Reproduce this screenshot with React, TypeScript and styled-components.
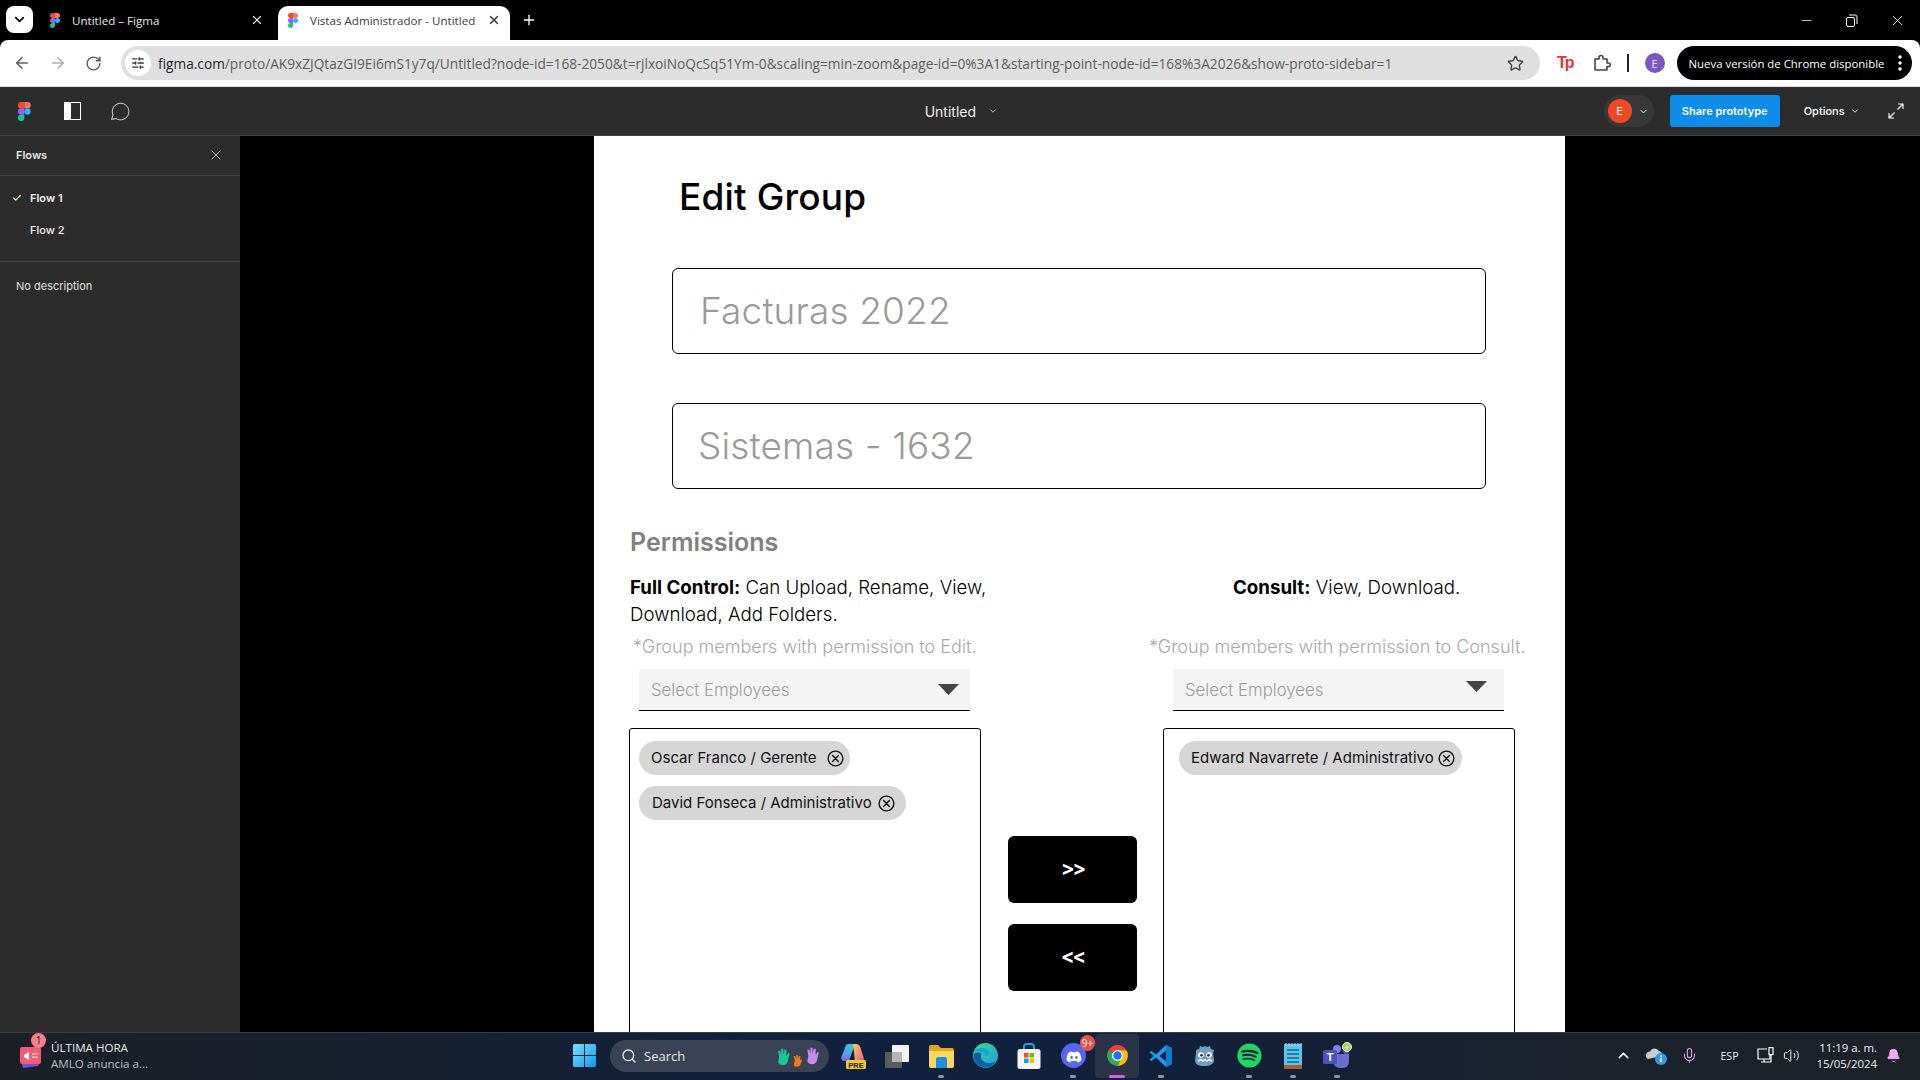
import React from "react";
import styled, { createGlobalStyle } from "styled-components";
import { ArrowLeft, ArrowRight, RotateCw, Star, X, Plus, ChevronDown, ChevronUp, Minus, Check, Search, Mic, Volume2, Bell, SlidersHorizontal } from "lucide-react";
import { FaDiscord, FaSpotify } from "react-icons/fa";

const Global = createGlobalStyle`
  html, body { margin: 0; padding: 0; background: #000; }
  * { box-sizing: border-box; }
`;

const Page = styled.div`
  width: 1920px; height: 1080px; overflow: hidden; display: flex; flex-direction: column;
  font-family: "Open Sans", "Liberation Sans", sans-serif;
`;

/* ---------- Chrome tab strip ---------- */
const TabStrip = styled.div`
  height: 40px; background: #000; display: flex; align-items: flex-end; flex: none; color: #fff;
`;
const TabListButton = styled.div`
  width: 27px; height: 27px; margin: 0 1px 7px 6px; border-radius: 8px; background: #fff; color: #111;
  display: flex; align-items: center; justify-content: center; flex: none;
`;
const Tab = styled.div<{ $active?: boolean; $w: number; $padL: number; $padR: number }>`
  width: ${p => p.$w}px; height: 34px; display: flex; align-items: center; padding: 0 ${p => p.$padR}px 6px ${p => p.$padL}px; gap: 12px; flex: none;
  border-radius: 10px 10px 0 0;
  background: ${p => (p.$active ? "#fff" : "transparent")};
  color: ${p => (p.$active ? "#3c3c3c" : "#e8e8e8")};
  font-size: 11.6px;
`;
const TabTitle = styled.span`
  flex: 1; white-space: nowrap; overflow: hidden;
`;
const NewTab = styled.div`
  margin: 0 0 6px 11px; height: 28px; display: flex; align-items: center; color: #fff;
`;
const WindowControls = styled.div`
  margin: 0 0 6px auto; height: 28px; display: flex; align-items: center; gap: 31px; padding-right: 14px; color: #fff;
`;

/* ---------- Chrome address bar ---------- */
const AddressBar = styled.div`
  height: 47px; background: #fff; border-radius: 8px 8px 0 0; flex: none; display: flex; align-items: center;
  padding-left: 13px; border-bottom: 1px solid #d8d8d8;
`;
const NavButton = styled.div<{ $dim?: boolean }>`
  width: 36px; display: flex; justify-content: flex-start; flex: none;
  color: ${p => (p.$dim ? "#b0b0b0" : "#5c5c5c")};
`;
const UrlPill = styled.div`
  width: 1419px; height: 34px; background: #dfdfdf; border-radius: 17px; display: flex; align-items: center; padding: 0 16px 0 4px; flex: none;
`;
const SiteIcon = styled.div`
  width: 26px; height: 26px; border-radius: 50%; background: #fff; display: flex; align-items: center; justify-content: center; color: #333; flex: none;
`;
const UrlText = styled.div`
  flex: 1; margin-left: 7px; font-size: 13.7px; color: #5c5c5c; white-space: nowrap; overflow: hidden;
  b { font-weight: 400; color: #222; }
`;
const ToolIcon = styled.div<{ $ml: number }>`
  margin-left: ${p => p.$ml}px; display: flex; align-items: center; flex: none;
`;
const TpMark = styled.span`
  font: 800 16px "Liberation Sans", sans-serif; color: #f0303a; letter-spacing: -2px;
`;
const Separator = styled.div`
  width: 2px; height: 18px; background: #222; margin-left: 16px; flex: none;
`;
const ProfileDot = styled.div`
  width: 20px; height: 20px; border-radius: 50%; background: #7b57c2; color: #e9e0ff; font-size: 11px; margin-left: 16px; display: flex; align-items: center; justify-content: center; flex: none;
`;
const UpdatePill = styled.div`
  width: 235px; height: 34px; margin-left: 12px; border-radius: 17px; background: #000; color: #fff; font-size: 11.4px; display: flex; align-items: center; justify-content: space-between; padding: 0 5px 0 12px; white-space: nowrap; flex: none;
`;

/* ---------- Figma header ---------- */
const FigmaBar = styled.div`
  height: 49px; background: #2c2c2c; border-bottom: 1px solid #444; flex: none; display: flex; align-items: center; padding-left: 18px; color: #fff;
  font-family: Inter, "Liberation Sans", sans-serif;
`;
const PanelIcon = styled.div`
  width: 17px; height: 18px; margin-left: 33px; border: 1px solid #fff; border-left: 7px solid #fff; flex: none;
`;
const CommentIcon = styled.svg`
  margin-left: 29px; flex: none;
`;
const DocTitle = styled.div`
  margin-left: 795px; width: 50px; font-size: 14px; white-space: nowrap; flex: none; color: #f0f0f0;
`;
const DocChevron = styled.div`
  margin-left: 13px; display: flex; color: #ddd; flex: none;
`;
const UserPill = styled.div`
  margin-left: 606px; width: 50px; height: 32px; border-radius: 16px; background: #383838; display: flex; align-items: center; padding-left: 4px; gap: 6px; flex: none;
`;
const Avatar = styled.div`
  width: 24px; height: 24px; border-radius: 50%; background: #f24822; color: #fff; font-size: 11px; display: flex; align-items: center; justify-content: center;
`;
const ShareButton = styled.div`
  margin-left: 16px; width: 110px; height: 32px; border-radius: 3px; background: #0d8ce9; color: #fff; font-size: 11px; font-weight: 600; display: flex; align-items: center; justify-content: center; white-space: nowrap; flex: none;
`;
const OptionsMenu = styled.div`
  margin-left: 24px; font-size: 11px; font-weight: 500; display: flex; align-items: center; gap: 5px; flex: none;
`;
const ExpandIcon = styled.svg`
  margin-left: 28px; flex: none;
`;

/* ---------- Body ---------- */
const Body = styled.div`
  flex: 1; min-height: 0; display: flex; background: #000;
`;
const Sidebar = styled.aside`
  width: 240px; background: #2c2c2c; color: #f0f0f0; flex: none; font: 500 11px Inter, "Liberation Sans", sans-serif;
`;
const SideHead = styled.div`
  height: 40px; display: flex; align-items: center; justify-content: space-between; padding: 0 16px 1px; border-bottom: 1px solid #444; font-weight: 600; color: #e6e6e6;
`;
const FlowList = styled.div`
  height: 86px; padding-top: 6px; border-bottom: 1px solid #444;
`;
const FlowItem = styled.div<{ $bold?: boolean }>`
  height: 32px; display: flex; align-items: center; padding-left: 12px; gap: 8px; font-weight: ${p => (p.$bold ? 600 : 500)};
`;
const CheckSlot = styled.span`
  width: 10px; display: flex; flex: none;
`;
const Description = styled.div`
  padding: 17px 16px; color: #e0e0e0; font-weight: 400;
`;
const Canvas = styled.main`
  flex: 1; min-width: 0; display: flex; padding-left: 354px; overflow: hidden;
`;
const Frame = styled.section`
  width: 971px; height: 1000px; flex: none; background: #fff; padding-left: 35px; color: #000;
  font-family: Inter, "Liberation Sans", sans-serif;
`;
const Title = styled.h1`
  margin: 36px 0 0 50px; font-size: 37px; line-height: 50px; font-weight: 500; letter-spacing: 0.15px;
`;
const NameField = styled.div<{ $top: number; $inset: number }>`
  margin: ${p => p.$top}px 0 0 43px; width: 814px; height: 86px; border: 1.5px solid #000; border-radius: 6px;
  display: flex; align-items: center; padding: 0 0 2px ${p => p.$inset}px;
  font-size: 37px; color: #9a9a9a; font-weight: 300; letter-spacing: 0.15px;
`;
const SectionTitle = styled.h2`
  margin: 38px 0 0 1px; font-size: 25px; line-height: 30px; font-weight: 600; color: #808080;
`;
const PermGrid = styled.div`
  margin-top: 17px; display: grid; grid-template-columns: 352px 182px 352px;
`;
const PermColumn = styled.div``;
const PermText = styled.div<{ $indent?: number }>`
  height: 55px; font-size: 18.7px; line-height: 27px; font-weight: 300; padding-left: ${p => p.$indent ?? 1}px;
  white-space: nowrap;
  b { font-weight: 700; }
`;
const Hint = styled.div<{ $shift: number }>`
  margin: 6px 0 0 ${p => p.$shift}px; font-size: 18px; line-height: 24px; color: #a8a8a8; font-weight: 300; white-space: nowrap;
`;
const Select = styled.div<{ $arrowUp?: boolean }>`
  margin: 10px 0 0 10px; width: 331px; height: 42px; background: #f4f4f4; border-bottom: 1.5px solid #000;
  padding: 0 ${p => (p.$arrowUp ? 17 : 11)}px 0 12px; display: flex; align-items: center; justify-content: space-between;
  font-size: 16.8px; color: #9c9c9c; font-weight: 300;
  svg { transform: translateY(${p => (p.$arrowUp ? -3 : 0)}px); }
`;
const MemberBox = styled.div`
  margin-top: 17px; height: 400px; border: 1.5px solid #000; border-radius: 3px; padding: 12px 9px; display: flex; flex-direction: column; align-items: flex-start; gap: 11px;
`;
const Chip = styled.div<{ $w: number; $left?: number; $gap?: number; $pad?: number }>`
  width: ${p => p.$w}px; height: 34px; margin-left: ${p => p.$left ?? 0}px; border-radius: 17px; background: #d6d6d6; display: flex; align-items: center;
  padding-left: ${p => p.$pad ?? 12}px; font-size: 15px; color: #111; font-weight: 400; white-space: nowrap; gap: ${p => p.$gap ?? 10}px; flex: none;
  span { position: relative; top: -1px; }
`;
const MoveStack = styled.div`
  padding: 262px 0 0 27px; display: flex; flex-direction: column; gap: 21px;
`;
const MoveButton = styled.div`
  width: 129px; height: 67px; border-radius: 6px; background: #000; color: #fff; font-size: 20px; font-weight: 700; letter-spacing: -2px; padding-bottom: 3px; display: flex; align-items: center; justify-content: center;
`;

/* ---------- Windows taskbar ---------- */
const Taskbar = styled.footer`
  height: 48px; flex: none; display: flex; align-items: center; color: #fff; border-top: 1px solid #3a3d42; padding-bottom: 2px;
  background: linear-gradient(90deg, #1c2026 0%, #17202e 18%, #10213f 45%, #13203a 62%, #1b222c 82%, #1d2229 100%);
`;
const NewsWidget = styled.div`
  width: 562px; display: flex; align-items: center; padding-left: 20px; gap: 9px; flex: none; position: relative;
`;
const NewsText = styled.div`
  font-size: 11.6px; line-height: 16px; color: #e8e8e8;
  span { display: block; color: #bdbdbd; }
`;
const Badge = styled.div`
  position: absolute; left: 31px; top: -7px; width: 15px; height: 15px; border-radius: 50%; background: #f77f8e; color: #222; font-size: 10px; display: flex; align-items: center; justify-content: center;
`;
const StartTile = styled.div`
  width: 44px; display: flex; justify-content: center; flex: none;
`;
const SearchPill = styled.div`
  width: 219px; height: 32px; margin-left: 4px; border-radius: 16px; background: #3a4355; display: flex; align-items: center; padding-left: 11px; gap: 7px; font-size: 13px; color: #e8e8e8; flex: none;
`;
const Hands = styled.div`
  margin-left: auto; padding-right: 5px; display: flex;
`;
const AppRow = styled.div`
  margin-left: 2px; display: flex; flex: none;
`;
const AppSlot = styled.div<{ $active?: boolean }>`
  width: 44px; height: 44px; position: relative; display: flex; align-items: center; justify-content: center; border-radius: 4px;
  background: ${p => (p.$active ? "#2a3347" : "transparent")};
`;
const RunDot = styled.i<{ $active?: boolean }>`
  position: absolute; bottom: 0; left: 50%; transform: translateX(-50%); height: 3px; border-radius: 2px;
  width: ${p => (p.$active ? 16 : 6)}px; background: ${p => (p.$active ? "#d65fe0" : "#8f96a3")};
`;
const DiscordBadge = styled.span`
  position: absolute; right: 0; top: 1px; height: 16px; min-width: 15px; border-radius: 8px; background: #e5534b; color: #fff; font-size: 10px; padding: 0 1px; display: flex; align-items: center; justify-content: center;
`;
const Tray = styled.div`
  margin-left: auto; display: flex; align-items: center; flex: none; padding-right: 19px;
`;
const TrayItem = styled.div<{ $ml: number; $color?: string }>`
  margin-left: ${p => p.$ml}px; display: flex; align-items: center; color: ${p => p.$color ?? "#fff"}; flex: none;
`;
const LangLabel = styled.span`
  font-size: 10.6px; color: #eee;
`;
const Clock = styled.div`
  margin-left: 17px; text-align: right; font-size: 11.4px; line-height: 16px; color: #eee; white-space: nowrap; flex: none;
`;

const FigmaLogo = ({ h = 18 }: { h?: number }) => (
  <svg width={h * 0.667} height={h} viewBox="0 0 38 57" style={{ flex: "none" }}>
    <path fill="#1abcfe" d="M19 28.5a9.5 9.5 0 1 1 19 0 9.5 9.5 0 0 1-19 0z" />
    <path fill="#0acf83" d="M0 47.5A9.5 9.5 0 0 1 9.5 38H19v9.5a9.5 9.5 0 1 1-19 0z" />
    <path fill="#ff7262" d="M19 0v19h9.5a9.5 9.5 0 1 0 0-19H19z" />
    <path fill="#f24e1e" d="M0 9.5A9.5 9.5 0 0 0 9.5 19H19V0H9.5A9.5 9.5 0 0 0 0 9.5z" />
    <path fill="#a259ff" d="M0 28.5A9.5 9.5 0 0 0 9.5 38H19V19H9.5A9.5 9.5 0 0 0 0 28.5z" />
  </svg>
);

const CircleX = ({ s = 17 }: { s?: number }) => (
  <svg width={s} height={s} viewBox="0 0 18 18" fill="none" stroke="#111" strokeWidth="1.5" style={{ flex: "none" }}>
    <circle cx="9" cy="9" r="7.8" />
    <path d="M5.9 5.9l6.2 6.2M12.100 5.900l-6.200 6.200" strokeLinecap="round" />
  </svg>
);

const Triangle = () => (
  <svg width="21" height="11" viewBox="0 0 21 11"><path d="M0 0h21L10.500 11z" fill="#444" /></svg>
);

const ExtensionPuzzle = () => (
  <svg width="18" height="18" viewBox="0 0 18 18" fill="none" stroke="#444" strokeWidth="1.6">
    <path d="M2 5h4V3.500a2 2 0 0 1 4 0V5h4v4h1.500a1.800 1.800 0 0 1 0 3.600H14V16H2z" strokeLinejoin="round" />
  </svg>
);

const Windows = () => (
  <svg width="23" height="23" viewBox="0 0 23 23">
    <defs><linearGradient id="win" x1="0" y1="0" x2="1" y2="1"><stop offset="0" stopColor="#7fdcff" /><stop offset="1" stopColor="#0f9be8" /></linearGradient></defs>
    <path fill="url(#win)" d="M0 1.500A1.500 1.500 0 0 1 1.500 0H11v11H0zM12 0h9.500A1.500 1.500 0 0 1 23 1.500V11H12zM0 12h11v11H1.500A1.500 1.500 0 0 1 0 21.500zM12 12h11v9.500a1.500 1.500 0 0 1-1.500 1.500H12z" />
  </svg>
);

const NewsIcon = () => (
  <svg width="22" height="26" viewBox="0 0 22 26">
    <path d="M1 18l20-3-3 8-15 2z" fill="#7a4fe0" />
    <rect x="0" y="4" width="21" height="17" rx="2" fill="#f25c78" />
    <path d="M4 12l5-3v8l-5-3z" fill="#fff" />
    <rect x="12" y="10" width="6" height="1.500" fill="#ffd1a8" />
    <rect x="12" y="13.500" width="6" height="1.500" fill="#ffd1a8" />
  </svg>
);

const HandsIcon = () => (
  <svg width="48" height="28" viewBox="0 0 46 26">
    <path d="M3 12l-1-6 2 0 1 4 0-6 2 0 0 6 1-5 2 0 0 6 2-3 1 1-2 8a5 5 0 0 1-9 0z" fill="#16c99a" transform="translate(0 2)" />
    <path d="M18 14l-1-4 1.500 0 1 3 0-4 1.500 0 0 4 1-3 1.500 0-.5 4 1.500-1 .5 1-2 5a4 4 0 0 1-6 0z" fill="#f07a1a" transform="translate(0 3)" />
    <path d="M31 10l-1-6 2 0 1 4 0-6 2 0 0 6 1-5 2 0 0 6 2-3 1 1-2 8a5 5 0 0 1-9 0z" fill="#c78af0" transform="translate(0 3)" />
  </svg>
);

const Copilot = () => (
  <svg width="26" height="28" viewBox="0 0 26 28">
    <defs>
      <linearGradient id="copA" x1="0" y1="0" x2="0" y2="1"><stop offset="0" stopColor="#32c8d8" /><stop offset=".6" stopColor="#5aa0ee" /><stop offset="1" stopColor="#7a5fe0" /></linearGradient>
      <linearGradient id="copB" x1="0" y1="0" x2="1" y2="1"><stop offset="0" stopColor="#f3d24a" /><stop offset=".6" stopColor="#f08a7a" /><stop offset="1" stopColor="#d84fb0" /></linearGradient>
    </defs>
    <path d="M8 2h7l-6 17H4c-2.200 0-3.300-1.800-2.600-4L5.500 4.500C6 3 7 2 8 2z" fill="url(#copA)" />
    <path d="M13 2h3c2 0 3.500 1 4.200 3l3.600 11c.6 2-.6 4-2.800 4h-6z" fill="url(#copB)" />
    <rect x="6" y="18" width="20" height="9" rx="1.500" fill="#f6c928" />
    <text x="16" y="25.500" textAnchor="middle" fontSize="7.500" fontWeight="800" fontFamily="Liberation Sans" fill="#222">PRE</text>
  </svg>
);

const TaskView = () => (
  <svg width="24" height="24" viewBox="0 0 24 24">
    <rect x="7" y="1" width="17" height="17" rx="1" fill="#f2f2f2" />
    <rect x="0" y="8" width="17" height="16" rx="1" fill="#5b5b5b" />
    <rect x="7" y="8" width="10" height="10" fill="#b5b5b5" />
  </svg>
);

const Explorer = () => (
  <svg width="25" height="24" viewBox="0 0 25 24">
    <path d="M0 3a2 2 0 0 1 2-2h7l3 3h11a2 2 0 0 1 2 2v3H0z" fill="#e3a81f" />
    <path d="M0 7h25v15a2 2 0 0 1-2 2H2a2 2 0 0 1-2-2z" fill="#ffd75e" />
    <path d="M7 15a2 2 0 0 1 2-2h7a2 2 0 0 1 2 2v9H7z" fill="#1f8fe0" />
  </svg>
);

const Edge = () => (
  <svg width="25" height="25" viewBox="0 0 25 25">
    <defs><linearGradient id="edg" x1="0" y1="0" x2="1" y2="1"><stop offset="0" stopColor="#3ddc84" /><stop offset="1" stopColor="#1b9de2" /></linearGradient></defs>
    <circle cx="12.500" cy="12.500" r="12.500" fill="url(#edg)" />
    <path d="M1 9c2-4 8-5 12-3 3 1.500 4 5 2 6.500-1 .8-3 .5-3-.5 0-3-7-5-11-3z" fill="#12a5d8" />
    <path d="M0.500 12c0-2 6-4 8-1-2 4 1 8 6 9 3 .6 6-.5 8-2-2 5-7 7-11 6.500C5 24 0.500 19 0.500 12z" fill="#0f5fa8" />
  </svg>
);

const Store = () => (
  <svg width="24" height="26" viewBox="0 0 24 26">
    <path d="M7 7V4a3 3 0 0 1 3-3h4a3 3 0 0 1 3 3v3" fill="none" stroke="#1f9fe0" strokeWidth="2" />
    <rect x="0.500" y="6" width="23" height="20" rx="2.500" fill="#f4f4f4" />
    <rect x="7" y="10" width="4.500" height="4.500" fill="#f25022" />
    <rect x="12.500" y="10" width="4.500" height="4.500" fill="#7fba00" />
    <rect x="7" y="15.500" width="4.500" height="4.500" fill="#00a4ef" />
    <rect x="12.500" y="15.500" width="4.500" height="4.500" fill="#ffb900" />
  </svg>
);

const DiscordMark = () => (
  <svg width="25" height="25" viewBox="0 0 25 25" style={{ overflow: "visible" }}>
    <circle cx="12.500" cy="12.500" r="12.500" fill="#5865f2" />
    <foreignObject x="4.500" y="4.500" width="16" height="16"><FaDiscord size={16} color="#fff" /></foreignObject>
  </svg>
);

const ChromeMark = () => (
  <svg width="25" height="25" viewBox="0 0 48 48">
    <path d="M24 24L6.700 14A20 20 0 0 1 41.300 14H24z" fill="#ea4335" />
    <path d="M24 24l-17.300-10A20 20 0 0 0 24 44l10-20z" fill="#34a853" />
    <path d="M24 14h17.300A20 20 0 0 1 24 44l10-20a10 10 0 0 0-10-10z" fill="#fbbc04" />
    <circle cx="24" cy="24" r="10.500" fill="#fff" />
    <circle cx="24" cy="24" r="8" fill="#1a73e8" />
  </svg>
);

const VSCode = () => (
  <svg width="24" height="24" viewBox="0 0 24 24">
    <path d="M17 1l6 3v16l-6 3-10-9.500L2.500 17 0.500 15.500 5 12 0.500 8.500 2.500 7 7 10.500z" fill="#1f9cf0" />
    <path d="M17 6.500L10.500 12 17 17.500z" fill="#0f1f3a" />
    <path d="M17 1l6 3v16l-6 3z" fill="#0a7fd0" />
  </svg>
);

const Godot = () => (
  <svg width="24" height="24" viewBox="0 0 24 24">
    <path d="M3 6l3-1 1-3 3 1 2-1 2 1 3-1 1 3 3 1-1 4 1 6c0 4-4 6-10 6S2 20 2 16l1-6z" fill="#6f9fc8" />
    <circle cx="8" cy="11" r="2.800" fill="#fff" /><circle cx="16" cy="11" r="2.800" fill="#fff" />
    <circle cx="8.500" cy="11.300" r="1.400" fill="#333" /><circle cx="15.500" cy="11.300" r="1.400" fill="#333" />
    <path d="M5 17l3-1.500 2 1.500 2-1.500 2 1.500 2-1.500 3 1.500" stroke="#fff" strokeWidth="1.400" fill="none" />
  </svg>
);

const Notepad = () => (
  <svg width="18" height="26" viewBox="0 0 18 26">
    <rect x="0" y="1" width="18" height="25" rx="1" fill="#5cc4ea" />
    <rect x="0" y="22" width="18" height="4" fill="#a8602c" />
    <path d="M3 7h12M3 11h12M3 15h12M3 19h12" stroke="#14628f" strokeWidth="1.600" />
    <path d="M2 0v3M5 0v3M8 0v3M11 0v3M14 0v3M17 0v3" stroke="#a8e0f5" strokeWidth="1" />
  </svg>
);

const Teams = () => (
  <svg width="29" height="27" viewBox="0 0 29 27">
    <circle cx="14" cy="7" r="4" fill="#7b83eb" />
    <circle cx="23" cy="9" r="3" fill="#5059c9" />
    <path d="M10 12h16v8a6 6 0 0 1-6 6h-3a7 7 0 0 1-7-7z" fill="#6a70c9" />
    <rect x="0" y="8" width="14" height="14" rx="1.500" fill="#4b53bc" />
    <text x="7" y="19" textAnchor="middle" fontSize="11" fontWeight="700" fontFamily="Liberation Sans" fill="#fff">T</text>
    <circle cx="24" cy="5" r="4.500" fill="#9bd34a" stroke="#f4f4f4" />
    <path d="M22 5l1.500 1.500L26 3.800" stroke="#fff" fill="none" strokeWidth="1.200" />
  </svg>
);

const OneDrive = () => (
  <svg width="21" height="18" viewBox="0 0 21 18">
    <path d="M2 12a4 4 0 0 1 2-7.500A5 5 0 0 1 13 4a4 4 0 0 1 3 5z" fill="#c9ccd1" />
    <circle cx="15" cy="12" r="6" fill="#2f9be6" />
    <rect x="14.200" y="11" width="1.600" height="4.200" fill="#fff" />
    <rect x="14.200" y="8.300" width="1.600" height="1.600" fill="#fff" />
  </svg>
);

const Network = () => (
  <svg width="18" height="18" viewBox="0 0 18 18" fill="none" stroke="#fff" strokeWidth="1.200">
    <path d="M10 2H1v10h12V8M4 15h8M7 12v3" />
    <rect x="12" y="0.600" width="4" height="7" />
    <path d="M14 7.500V15h-2" />
  </svg>
);

export default function App() {
  return (
    <Page>
      <Global />
      <TabStrip>
        <TabListButton><ChevronDown size={15} strokeWidth={3} /></TabListButton>
        <Tab $w={244} $padL={16} $padR={14}>
          <FigmaLogo h={15} />
          <TabTitle>Untitled – Figma</TabTitle>
          <X size={14} strokeWidth={2} />
        </Tab>
        <Tab $active $w={232} $padL={10} $padR={9}>
          <FigmaLogo h={15} />
          <TabTitle>Vistas Administrador - Untitled</TabTitle>
          <X size={14} strokeWidth={2.5} />
        </Tab>
        <NewTab><Plus size={16} strokeWidth={2} /></NewTab>
        <WindowControls>
          <Minus size={15} strokeWidth={1.2} />
          <svg width="13" height="13" viewBox="0 0 13 13" fill="none" stroke="#fff"><rect x="1.500" y="3.500" width="8" height="9" rx="1.500" /><path d="M4 1h6a2 2 0 0 1 2 2v7" /></svg>
          <X size={17} strokeWidth={1.2} />
        </WindowControls>
      </TabStrip>

      <AddressBar>
        <NavButton><ArrowLeft size={18} /></NavButton>
        <NavButton $dim><ArrowRight size={18} /></NavButton>
        <NavButton><RotateCw size={17} /></NavButton>
        <UrlPill>
          <SiteIcon><SlidersHorizontal size={14} strokeWidth={2.2} /></SiteIcon>
          <UrlText><b>figma.com</b>/proto/AK9xZJQtazGI9Ei6mS1y7q/Untitled?node-id=168-2050&amp;t=rjlxoiNoQcSq51Ym-0&amp;scaling=min-zoom&amp;page-id=0%3A1&amp;starting-point-node-id=168%3A2026&amp;show-proto-sidebar=1</UrlText>
          <Star size={17} color="#444" strokeWidth={2} />
        </UrlPill>
        <ToolIcon $ml={17}><TpMark>Tp</TpMark></ToolIcon>
        <ToolIcon $ml={20}><ExtensionPuzzle /></ToolIcon>
        <Separator />
        <ProfileDot>E</ProfileDot>
        <UpdatePill>
          Nueva versión de Chrome disponible
          <svg width="14" height="18" viewBox="0 0 14 18" fill="#fff"><circle cx="7" cy="3" r="1.700" /><circle cx="7" cy="9" r="1.700" /><circle cx="7" cy="15" r="1.700" /></svg>
        </UpdatePill>
      </AddressBar>

      <FigmaBar>
        <FigmaLogo h={19} />
        <PanelIcon />
        <CommentIcon width="20" height="20" viewBox="0 0 20 20" fill="none" stroke="#d8d8d8" strokeWidth="1">
          <path d="M1.500 18.500l1.500-4.500A8.300 8.300 0 1 1 6 17.500z" strokeLinejoin="round" />
        </CommentIcon>
        <DocTitle>Untitled</DocTitle>
        <DocChevron><ChevronDown size={10} strokeWidth={2} /></DocChevron>
        <UserPill>
          <Avatar>E</Avatar>
          <ChevronDown size={11} strokeWidth={2} />
        </UserPill>
        <ShareButton>Share prototype</ShareButton>
        <OptionsMenu>Options <ChevronDown size={10} strokeWidth={2} /></OptionsMenu>
        <ExpandIcon width="16" height="16" viewBox="0 0 16 16" fill="none" stroke="#fff" strokeWidth="1.100">
          <path d="M15 6V1h-5M15 1L9.500 6.500M1 10v5h5M1 15l5.500-5.500" />
        </ExpandIcon>
      </FigmaBar>

      <Body>
        <Sidebar>
          <SideHead>Flows <X size={16} strokeWidth={1} color="#fff" /></SideHead>
          <FlowList>
            <FlowItem $bold><CheckSlot><Check size={10} strokeWidth={3} /></CheckSlot>Flow 1</FlowItem>
            <FlowItem><CheckSlot />Flow 2</FlowItem>
          </FlowList>
          <Description>No description</Description>
        </Sidebar>
        <Canvas>
          <Frame>
            <Title>Edit Group</Title>
            <NameField $top={46} $inset={27}>Facturas 2022</NameField>
            <NameField $top={49} $inset={25}>Sistemas - 1632</NameField>
            <SectionTitle>Permissions</SectionTitle>
            <PermGrid>
              <PermColumn>
                <PermText><b>Full Control:</b> Can Upload, Rename, View,<br />Download, Add Folders.</PermText>
                <Hint $shift={4}>*Group members with permission to Edit.</Hint>
                <Select>Select Employees <Triangle /></Select>
                <MemberBox>
                  <Chip $w={211}><span>Oscar Franco / Gerente</span> <CircleX /></Chip>
                  <Chip $w={267} $pad={13} $gap={6}><span>David Fonseca / Administrativo</span> <CircleX /></Chip>
                </MemberBox>
              </PermColumn>
              <MoveStack>
                <MoveButton>&gt;&gt;</MoveButton>
                <MoveButton>&lt;&lt;</MoveButton>
              </MoveStack>
              <PermColumn>
                <PermText $indent={70}><b>Consult:</b> View, Download.</PermText>
                <Hint $shift={-14}>*Group members with permission to Consult.</Hint>
                <Select $arrowUp>Select Employees <Triangle /></Select>
                <MemberBox>
                  <Chip $w={283} $left={6} $gap={4}><span>Edward Navarrete / Administrativo</span> <CircleX /></Chip>
                </MemberBox>
              </PermColumn>
            </PermGrid>
          </Frame>
        </Canvas>
      </Body>

      <Taskbar>
        <NewsWidget>
          <NewsIcon />
          <Badge>1</Badge>
          <NewsText>ÚLTIMA HORA<span>AMLO anuncia a...</span></NewsText>
        </NewsWidget>
        <StartTile><Windows /></StartTile>
        <SearchPill>
          <Search size={16} strokeWidth={2} />Search
          <Hands><HandsIcon /></Hands>
        </SearchPill>
        <AppRow>
          <AppSlot><Copilot /></AppSlot>
          <AppSlot><TaskView /></AppSlot>
          <AppSlot><Explorer /><RunDot /></AppSlot>
          <AppSlot><Edge /></AppSlot>
          <AppSlot><Store /></AppSlot>
          <AppSlot><DiscordMark /><DiscordBadge>9+</DiscordBadge><RunDot /></AppSlot>
          <AppSlot $active><ChromeMark /><RunDot $active /></AppSlot>
          <AppSlot><VSCode /><RunDot /></AppSlot>
          <AppSlot><Godot /></AppSlot>
          <AppSlot><FaSpotify size={25} color="#1ed760" /><RunDot /></AppSlot>
          <AppSlot><Notepad /><RunDot /></AppSlot>
          <AppSlot><Teams /><RunDot /></AppSlot>
        </AppRow>
        <Tray>
          <TrayItem $ml={0}><ChevronUp size={17} strokeWidth={2} /></TrayItem>
          <TrayItem $ml={14}><OneDrive /></TrayItem>
          <TrayItem $ml={14} $color="#e3a2ee"><Mic size={17} strokeWidth={1.5} /></TrayItem>
          <TrayItem $ml={22}><LangLabel>ESP</LangLabel></TrayItem>
          <TrayItem $ml={18}><Network /></TrayItem>
          <TrayItem $ml={8}><Volume2 size={17} strokeWidth={1.3} /></TrayItem>
          <Clock>11:19 a. m.<br />15/05/2024</Clock>
          <TrayItem $ml={9} $color="#f0a8ef"><Bell size={15} fill="#f0a8ef" strokeWidth={1.5} /></TrayItem>
        </Tray>
      </Taskbar>
    </Page>
  );
}
